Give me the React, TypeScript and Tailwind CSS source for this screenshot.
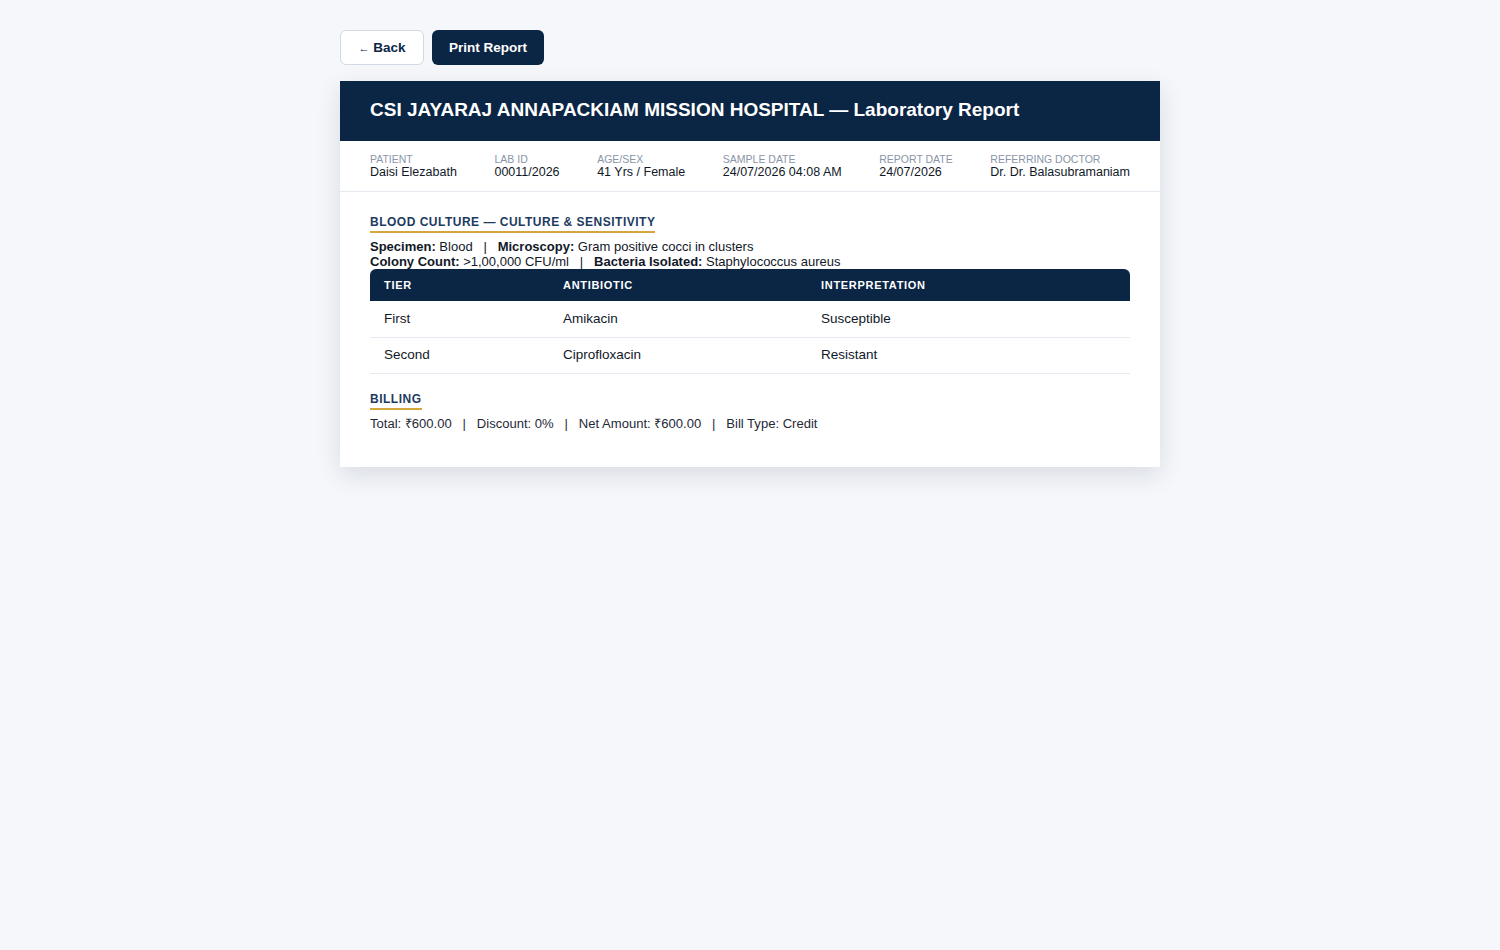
import React from "react";

const meta = [
  ["Patient", "Daisi Elezabath"],
  ["Lab ID", "00011/2026"],
  ["Age/Sex", "41 Yrs / Female"],
  ["Sample Date", "24/07/2026 04:08 AM"],
  ["Report Date", "24/07/2026"],
  ["Referring Doctor", "Dr. Dr. Balasubramaniam"],
];

const rows = [
  ["First", "Amikacin", "Susceptible"],
  ["Second", "Ciprofloxacin", "Resistant"],
];

export default function App() {
  return (
    <div
      className="min-h-[950px] bg-[#f5f7fb] text-[#111827]"
      style={{ fontFamily: '"Liberation Sans", Arial, sans-serif' }}
    >
      <div className="mx-auto w-[820px] pt-[30px]">
        <div className="flex gap-2">
          <button className="h-[35px] w-[84px] rounded-[6px] border border-[#d1d9e6] bg-white pt-[2px] text-[13.5px] font-bold text-[#0b2545]">
            <span className="text-[11px]">←</span> Back
          </button>
          <button className="h-[35px] w-[112px] rounded-[6px] bg-[#0b2545] pt-[2px] text-[13.5px] font-bold text-white">
            Print Report
          </button>
        </div>

        <div className="mt-4 bg-white shadow-[0_8px_24px_rgba(15,23,42,0.12)]">
          <div className="flex h-[60px] items-center bg-[#0b2545] px-[30px] pb-[2px]">
            <h1 className="text-[19px] font-bold text-white">
              CSI JAYARAJ ANNAPACKIAM MISSION HOSPITAL — Laboratory Report
            </h1>
          </div>

          <div className="flex justify-between border-b border-[#e5e9f0] px-[30px] py-[12px]">
            {meta.map(([k, v]) => (
              <div key={k} className="flex flex-col">
                <span className="text-[10.5px] leading-[12px] uppercase text-[#8a95a8]">{k}</span>
                <span className="text-[12.5px] leading-[14px] text-[#111827]">{v}</span>
              </div>
            ))}
          </div>

          <div className="px-[30px] pt-[17px] pb-[36px]">
            <div>
              <span className="inline-block border-b-2 border-[#d4a63c] pb-[2px] text-[12px] font-bold uppercase tracking-[0.5px] text-[#1e3a5f] leading-[14px]">
                Blood Culture — Culture &amp; Sensitivity
              </span>
            </div>
            <div className="mt-[6px] text-[13px] leading-[15px]">
              <div>
                <b>Specimen:</b> Blood &nbsp;&nbsp;|&nbsp;&nbsp; <b>Microscopy:</b> Gram positive cocci in clusters
              </div>
              <div>
                <b>Colony Count:</b> &gt;1,00,000 CFU/ml &nbsp;&nbsp;|&nbsp;&nbsp; <b>Bacteria Isolated:</b> Staphylococcus aureus
              </div>
            </div>

            <table className="w-full border-collapse text-[13.5px]">
              <thead>
                <tr className="h-[32px] bg-[#0b2545] text-left text-[11px] uppercase tracking-[0.7px] text-white">
                  <th className="w-[193px] rounded-tl-[6px] pl-[14px] font-bold">Tier</th>
                  <th className="w-[258px] font-bold">Antibiotic</th>
                  <th className="rounded-tr-[6px] font-bold">Interpretation</th>
                </tr>
              </thead>
              <tbody>
                {rows.map((r) => (
                  <tr key={r[0]} className="h-[36px] border-b border-[#e5e9f2]">
                    <td className="pl-[14px]">{r[0]}</td>
                    <td>{r[1]}</td>
                    <td>{r[2]}</td>
                  </tr>
                ))}
              </tbody>
            </table>

            <div className="mt-[12px]">
              <span className="inline-block border-b-2 border-[#d4a63c] pb-[2px] text-[12px] font-bold uppercase tracking-[0.5px] text-[#1e3a5f] leading-[14px]">
                Billing
              </span>
            </div>
            <div className="mt-[6px] text-[13.05px] leading-[15px] text-[#1f2937]">
              Total: ₹600.00 &nbsp;&nbsp;|&nbsp;&nbsp; Discount: 0% &nbsp;&nbsp;|&nbsp;&nbsp; Net Amount: ₹600.00 &nbsp;&nbsp;|&nbsp;&nbsp; Bill Type: Credit
            </div>
          </div>
        </div>
      </div>
    </div>
  );
}
